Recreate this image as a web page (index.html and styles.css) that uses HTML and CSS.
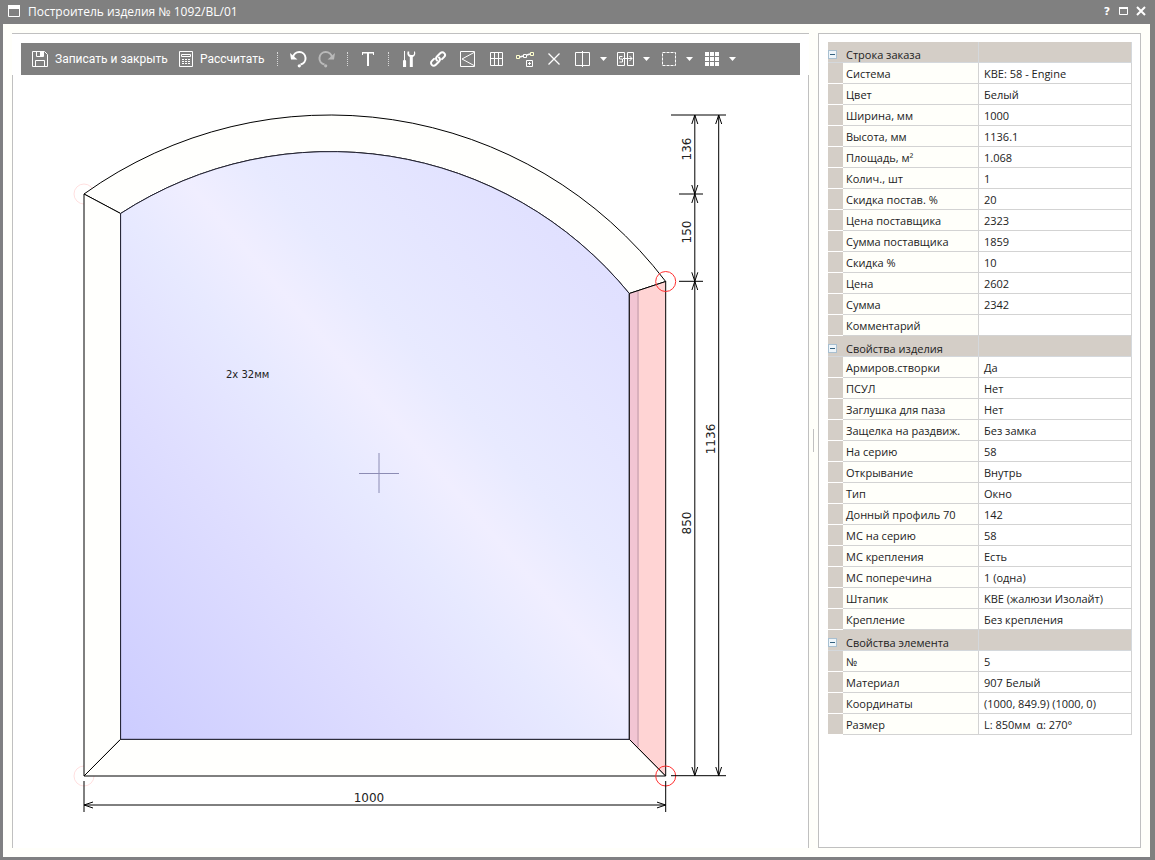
FILE: index.html
```html
<!DOCTYPE html>
<html lang="ru">
<head>
<meta charset="utf-8">
<title>Построитель изделия № 1092/BL/01</title>
<link rel="stylesheet" href="styles.css">
</head>
<body>
<div class="window">
  <header class="titlebar">
    <svg class="titlebar-icon" width="12" height="12" viewBox="0 0 12 12"><path d="M.5.5h11v11H.5z" fill="none" stroke="#fff"/><path d="M0 0h12v4H0z" fill="#fff"/></svg>
    <h1 class="titlebar-text">Построитель изделия № 1092/BL/01</h1>
    <div class="window-buttons">
      <button class="window-button" aria-label="Справка">?</button>
      <button class="window-button" aria-label="Развернуть"><svg width="10" height="10" viewBox="0 0 10 10"><path d="M.5 1.5h8v7h-8z" fill="none" stroke="#fff"/><path d="M0 1h9v2H0z" fill="#fff"/></svg></button>
      <button class="window-button" aria-label="Закрыть"><svg width="10" height="10" viewBox="0 0 10 10"><path d="M1 1l8 8M9 1L1 9" fill="none" stroke="#fff" stroke-width="2"/></svg></button>
    </div>
  </header>

  <main class="layout">
    <section class="editor">
      <div class="editor-head">
        <div class="toolbar" role="toolbar">
          <button class="tool tool-labelled tool-save"><svg width="17" height="18" viewBox="0 0 17 18" class="icon"><path d="M.5 1.500h12l3 3v12H.5z"/><path d="M4.500 1.500v5h7v-5M3.500 16.500v-6h9v6"/><path class="solid" d="M8 2h3v4H8z"/></svg><span>Записать и закрыть</span></button>
          <button class="tool tool-labelled tool-calc"><svg width="15" height="18" viewBox="0 0 15 18" class="icon"><path d="M.5 1.500h13v15H.5z"/><path d="M2.500 4.500h9v2h-9z"/><path d="M3 9.500h2m1 0h2m1 0h2M3 11.500h2m1 0h2m1 0h2M3 13.500h2m1 0h2m1 0h2"/></svg><span>Рассчитать</span></button>
          <span class="separator"></span>
          <button class="tool" aria-label="Отменить"><svg width="19" height="18" viewBox="0 0 19 18" class="icon"><path stroke-width="2" d="M4 7.500a6.300 6.300 0 1 1 7.500 7"/><path class="solid" d="M1 3l1 6.500h6.500L5.500 7z"/><circle class="solid" cx="10.300" cy="15.800" r="1.600"/></svg></button>
          <button class="tool tool-muted" aria-label="Вернуть"><svg width="19" height="18" viewBox="0 0 19 18" class="icon"><path stroke-width="2" d="M14 7.500a6.300 6.300 0 1 0-7.500 7"/><path class="solid" d="M17 3l-1 6.500H9.500L12.500 7z"/><circle class="solid" cx="7.700" cy="15.800" r="1.600"/></svg></button>
          <span class="separator"></span>
          <button class="tool" aria-label="Текст"><svg width="19" height="18" viewBox="0 0 19 18" class="icon"><path class="solid" d="M3 2h12v1.500H3zM8 3h2v13H8z"/><path d="M3.500 3v2M14.500 3v2"/></svg></button>
          <span class="separator"></span>
          <button class="tool" aria-label="Инструменты"><svg width="19" height="18" viewBox="0 0 19 18" class="icon"><path d="M4.500 1v9"/><path class="solid" d="M3.500 10h2l.6 1v6H3v-6zM7.600 1.500c-.8 3 .2 4.800 2.200 5.500V17h3V7c2-.7 3-2.500 2.200-5.500H14v2.800l-1.200.8h-2L9.200 4.300V1.500z"/></svg></button>
          <button class="tool" aria-label="Связать"><svg width="19" height="18" viewBox="0 0 19 18" class="icon"><g stroke-width="2" stroke-linecap="round"><path d="M8 10.500c-1.400-1.400-1-3 .2-4.200l3-3c2.800-2.800 6.600 1 3.800 3.800l-2 2"/><path d="M10 7.500c1.400 1.400 1 3-.2 4.200l-3 3c-2.800 2.800-6.600-1-3.800-3.800l2-2"/></g></svg></button>
          <button class="tool" aria-label="Створка"><svg width="19" height="18" viewBox="0 0 19 18" class="icon"><path d="M2.500 1.500h14v15h-14z"/><path d="M16 2.500L4 9l12 6.500"/></svg></button>
          <button class="tool" aria-label="Раскладка"><svg width="19" height="18" viewBox="0 0 19 18" class="icon"><path d="M3.500 2.500h12v13h-12zM7.500 2v14M11.500 2v14M3 8.500h13"/></svg></button>
          <button class="tool" aria-label="Добавить узел"><svg width="19" height="18" viewBox="0 0 19 18" class="icon"><path stroke="#ffffcc" d="M.500 5.500h3v3h-3zM14.500 2.500h3v3h-3z"/><path d="M4 7l3-1M11 5l3-1" stroke-width="1.500"/><path d="M7.500 4.500h3v3h-3zM10.500 10.500h6v6h-6zM12 13.500h3M13.500 12v3"/></svg></button>
          <button class="tool" aria-label="Удалить"><svg width="19" height="18" viewBox="0 0 19 18" class="icon"><path stroke-width="1.300" d="M3.500 3.500l11 11M14.500 3.500l-11 11"/></svg></button>
          <button class="tool tool-menu" aria-label="Разделить"><svg width="19" height="18" viewBox="0 0 19 18" class="icon"><path d="M1.500 2.500h14v13h-14z"/><path d="M8.500 1v16"/></svg><svg width="8" height="5" viewBox="0 0 8 5" class="caret"><path d="M0 0h7L3.500 4z"/></svg></button>
          <button class="tool tool-menu" aria-label="Сдвинуть"><svg width="19" height="18" viewBox="0 0 19 18" class="icon"><path d="M.500 2.500h7v13h-7zM10.500 2.500h6v13h-6z"/><path d="M5.500 6.500h-3v2.500h3v3h-3M6 8.500h9M12.500 6l2.500 2.500-2.500 2.500"/></svg><svg width="8" height="5" viewBox="0 0 8 5" class="caret"><path d="M0 0h7L3.500 4z"/></svg></button>
          <button class="tool tool-menu" aria-label="Выделение"><svg width="19" height="18" viewBox="0 0 19 18" class="icon"><path d="M2.500 2.500h13v13h-13z" stroke-dasharray="3 1"/></svg><svg width="8" height="5" viewBox="0 0 8 5" class="caret"><path d="M0 0h7L3.500 4z"/></svg></button>
          <button class="tool tool-menu" aria-label="Сетка"><svg width="19" height="18" viewBox="0 0 19 18" class="icon"><path class="solid" d="M2 2h4v4H2zM7 2h4v4H7zM12 2h4v4h-4zM2 7h4v4H2zM7 7h4v4H7zM12 7h4v4h-4zM2 12h4v4H2zM7 12h4v4H7zM12 12h4v4h-4z"/></svg><svg width="8" height="5" viewBox="0 0 8 5" class="caret"><path d="M0 0h7L3.500 4z"/></svg></button>
        </div>
      </div>
      <div class="canvas">
        <svg class="drawing" viewBox="13 75 795 773" role="img" aria-label="Чертёж изделия">
          <defs>
            <linearGradient id="glass" x1="0" y1="1" x2="1" y2="0">
              <stop offset="0" stop-color="#ccccff"/>
              <stop offset=".3" stop-color="#dfdeff"/>
              <stop offset=".45" stop-color="#e7e9ff"/>
              <stop offset=".54" stop-color="#f0eeff"/>
              <stop offset=".62" stop-color="#e8eaff"/>
              <stop offset=".85" stop-color="#e1e1ff"/>
              <stop offset="1" stop-color="#dedeff"/>
            </linearGradient>
            <marker id="arrow" viewBox="0 0 10 8" refX="9" refY="4" markerWidth="10" markerHeight="8" orient="auto-start-reverse"><path d="M0 1l9 3-9 3" fill="none" stroke="#000"/></marker>
          </defs>
          <g class="node node-faint"><circle cx="84" cy="194" r="10"/><circle cx="84" cy="776" r="10"/></g>
          <g class="profile">
            <path d="M84 194A422 422 0 0 1 665.700 281.500L629.300 293.500A386 386 0 0 0 120.600 213.500z"/>
            <path d="M84 194L120.600 213.500V739.300L84 776z"/>
            <path d="M84 776L120.600 739.300H629.300L665.700 776z"/>
          </g>
          <path class="pane" d="M120.600 213.500A386 386 0 0 1 629.300 293.500V739.300H120.600z"/>
          <path class="profile-active" d="M629.300 293.500L665.700 281.500V776L629.300 739.300z"/>
          <path class="bead" d="M630 293.500L638 291V747.500L630 740z"/>
          <path class="bead-edge" d="M638 291V747"/>
          <path class="outline" d="M629.300 293.500L665.700 281.500V776L629.300 739.300z"/>
          <path class="centre" d="M359 473.500h40M379 453v40"/>
          <g class="node"><circle cx="665.700" cy="281.500" r="10"/><circle cx="665.700" cy="776" r="10"/></g>
          <g class="dimension">
            <path d="M671 115H726M679 194H703M679 281.300H703M671 775.700H726M84 781V812M665.700 781V812"/>
            <g marker-start="url(#arrow)" marker-end="url(#arrow)">
              <path d="M694.800 115V194"/>
              <path d="M694.800 194V281.300"/>
              <path d="M694.800 281.300V775.700"/>
              <path d="M718.700 115V775.700"/>
              <path d="M84 805H665.700"/>
            </g>
          </g>
          <g class="dimension-text">
            <text x="369" y="802">1000</text>
            <text transform="translate(691 149) rotate(-90)">136</text>
            <text transform="translate(691 232) rotate(-90)">150</text>
            <text transform="translate(691 523) rotate(-90)">850</text>
            <text transform="translate(715 439) rotate(-90)">1136</text>
          </g>
          <text class="pane-text" x="226" y="378">2x 32мм</text>
        </svg>
      </div>
    </section>

    <div class="splitter"><span class="splitter-grip"></span></div>

    <aside class="inspector">
      <table class="properties">
        <colgroup><col class="col-gutter"><col class="col-name"><col></colgroup>
        <tbody>
          <tr class="group"><td><button class="collapse" aria-label="Свернуть"></button></td><th scope="rowgroup">Строка заказа</th><td></td></tr>
          <tr><td></td><th scope="row">Система</th><td>KBE: 58 - Engine</td></tr>
          <tr><td></td><th scope="row">Цвет</th><td>Белый</td></tr>
          <tr><td></td><th scope="row">Ширина, мм</th><td>1000</td></tr>
          <tr><td></td><th scope="row">Высота, мм</th><td>1136.1</td></tr>
          <tr><td></td><th scope="row">Площадь, м²</th><td>1.068</td></tr>
          <tr><td></td><th scope="row">Колич., шт</th><td>1</td></tr>
          <tr><td></td><th scope="row">Скидка постав. %</th><td>20</td></tr>
          <tr><td></td><th scope="row">Цена поставщика</th><td>2323</td></tr>
          <tr><td></td><th scope="row">Сумма поставщика</th><td>1859</td></tr>
          <tr><td></td><th scope="row">Скидка %</th><td>10</td></tr>
          <tr><td></td><th scope="row">Цена</th><td>2602</td></tr>
          <tr><td></td><th scope="row">Сумма</th><td>2342</td></tr>
          <tr><td></td><th scope="row">Комментарий</th><td></td></tr>
        </tbody>
        <tbody>
          <tr class="group"><td><button class="collapse" aria-label="Свернуть"></button></td><th scope="rowgroup">Свойства изделия</th><td></td></tr>
          <tr><td></td><th scope="row">Армиров.створки</th><td>Да</td></tr>
          <tr><td></td><th scope="row">ПСУЛ</th><td>Нет</td></tr>
          <tr><td></td><th scope="row">Заглушка для паза</th><td>Нет</td></tr>
          <tr><td></td><th scope="row">Защелка на раздвиж.</th><td>Без замка</td></tr>
          <tr><td></td><th scope="row">На серию</th><td>58</td></tr>
          <tr><td></td><th scope="row">Открывание</th><td>Внутрь</td></tr>
          <tr><td></td><th scope="row">Тип</th><td>Окно</td></tr>
          <tr><td></td><th scope="row">Донный профиль 70</th><td>142</td></tr>
          <tr><td></td><th scope="row">МС на серию</th><td>58</td></tr>
          <tr><td></td><th scope="row">МС крепления</th><td>Есть</td></tr>
          <tr><td></td><th scope="row">МС поперечина</th><td>1 (одна)</td></tr>
          <tr><td></td><th scope="row">Штапик</th><td>KBE (жалюзи Изолайт)</td></tr>
          <tr><td></td><th scope="row">Крепление</th><td>Без крепления</td></tr>
        </tbody>
        <tbody>
          <tr class="group"><td><button class="collapse" aria-label="Свернуть"></button></td><th scope="rowgroup">Свойства элемента</th><td></td></tr>
          <tr><td></td><th scope="row">№</th><td>5</td></tr>
          <tr><td></td><th scope="row">Материал</th><td>907 Белый</td></tr>
          <tr><td></td><th scope="row">Координаты</th><td>(1000, 849.9) (1000, 0)</td></tr>
          <tr><td></td><th scope="row">Размер</th><td>L: 850мм&nbsp; α: 270°</td></tr>
        </tbody>
      </table>
    </aside>
  </main>
</div>
</body>
</html>
```
FILE: styles.css
```css
* { box-sizing: border-box; }

body {
  margin: 0;
  font-family: "Open Sans", "Noto Sans", sans-serif;
  font-size: 11px;
  color: #222;
}

button {
  margin: 0;
  padding: 0;
  border: 0;
  background: none;
  color: inherit;
  font: inherit;
}

svg { display: block; flex: none; }

.window {
  display: flex;
  flex-direction: column;
  min-height: 100vh;
  border: 3px solid #808080;
  border-top: 0;
  border-right-width: 5px;
  background: #fffffa;
}

.titlebar {
  display: flex;
  align-items: center;
  gap: 8px;
  height: 24px;
  padding: 0 1px 2px 5px;
  background: #808080;
  color: #fff;
}

.titlebar-text {
  flex: 1;
  margin: 0;
  font-size: 12px;
  font-weight: 500;
}

.window-buttons { display: flex; gap: 1px; }

.window-button {
  display: flex;
  align-items: center;
  justify-content: center;
  width: 16px;
  height: 16px;
  font-family: "DejaVu Sans", sans-serif;
  font-weight: bold;
}

.layout {
  display: grid;
  flex: 1;
  grid-template-columns: minmax(0, 1fr) 9px 323px;
  padding: 9px;
}

.editor { display: flex; flex-direction: column; background: #fff; }

.editor-head { padding: 9px 9px 0; border-top: 1px solid #c0c0c0; }

.toolbar {
  display: flex;
  align-items: center;
  height: 32px;
  padding-left: 11px;
  background: #808080;
  color: #fff;
  font-family: Roboto, "Noto Sans", sans-serif;
  font-size: 12px;
}

.tool {
  display: flex;
  align-items: center;
  width: 29px;
  height: 32px;
  padding-left: 5px;
}

.tool-labelled {
  gap: 6px;
  width: auto;
  padding: 0;
  white-space: nowrap;
}

.tool-save { min-width: 147px; }

.tool-calc { min-width: 93px; }

.tool-muted { opacity: .45; }

.tool-menu { gap: 7px; width: 43px; }

.icon { fill: none; stroke: #fff; }

.icon .solid { fill: #fff; stroke: none; }

.caret { fill: #fff; }

.separator {
  width: 1px;
  height: 14px;
  margin: 0 6px 0 5px;
  border-left: 1px dotted #d8d8d8;
}

.canvas {
  flex: 1;
  border: solid #c0c0c0;
  border-width: 0 1px;
}

.drawing { width: 100%; height: auto; }

.profile { fill: #fffffd; stroke: #000; }

.pane { fill: url(#glass); stroke: #223; }

.profile-active { fill: #ffd4d4; }

.bead { fill: #f2c5d3; }

.bead-edge { stroke: #d9b0bc; stroke-width: 2; }

.outline { fill: none; stroke: #000; }

.centre { stroke: #8c8cb4; }

.node { fill: none; stroke: #ff3030; }

.node-faint { stroke: #ffe0e0; }

.dimension { fill: none; stroke: #000; }

.dimension-text {
  fill: #222;
  font-family: "DejaVu Sans", sans-serif;
  font-size: 12px;
  text-anchor: middle;
}

.pane-text { fill: #222; font-family: "DejaVu Sans", sans-serif; font-size: 10px; }

.splitter { display: flex; align-items: center; padding-left: 4px; }

.splitter-grip { width: 1px; height: 23px; background: #c0c0c0; }

.inspector {
  padding: 8px 8px 8px 9px;
  border: 1px solid #c0c0c0;
  background: #fff;
}

.properties {
  width: 100%;
  table-layout: fixed;
  border-collapse: separate;
  border-spacing: 0;
}

.col-gutter { width: 15px; }

.col-name { width: 136px; }

.properties th,
.properties td {
  height: 21px;
  padding: 1px 0 0 5px;
  border: solid #d3d3d3;
  border-width: 0 1px 1px 0;
  font-weight: normal;
  line-height: 15px;
  text-align: left;
  white-space: nowrap;
}

.properties th { padding-left: 3px; background: #fffffa; }

.properties td:first-child {
  padding: 0;
  border-right: 0;
  border-bottom-color: #fff;
  background: #d4cec7;
}

.properties .group th,
.properties .group td {
  padding-top: 5px;
  border-color: #d4d8dc;
  background: #d4cec7;
}

.collapse {
  display: flex;
  align-items: center;
  justify-content: center;
  width: 9px;
  height: 9px;
  border: 1px solid #a8bfd0;
  background: #eef5fa;
}

.collapse::before { content: ""; width: 5px; height: 1px; background: #34617f; }
```
